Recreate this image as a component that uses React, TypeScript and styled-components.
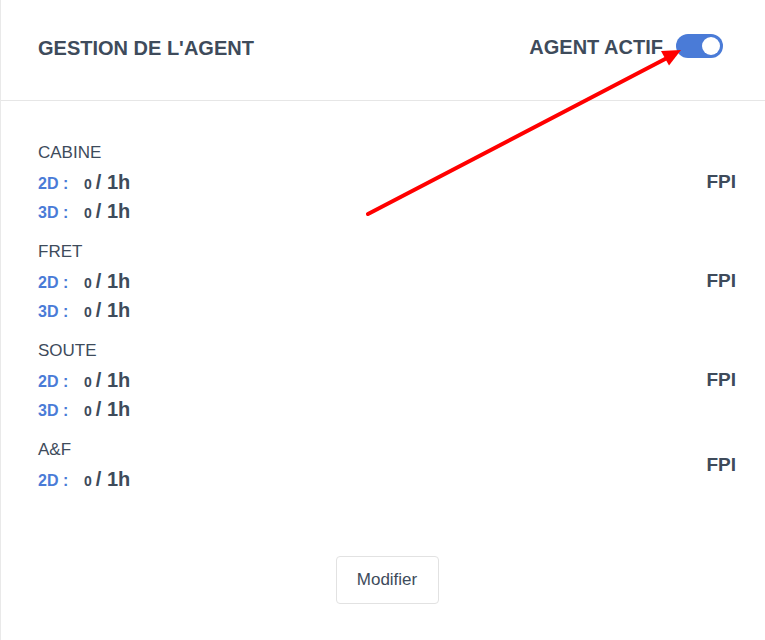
import React from "react"
import styled, { createGlobalStyle } from "styled-components"

const TEXT = "#3e4b5b"
const BLUE = "#4a7bd7"

const GlobalStyle = createGlobalStyle`
  html, body {
    margin: 0;
    padding: 0;
    background: #ffffff;
    font-family: "Liberation Sans", Arial, sans-serif;
    color: ${TEXT};
  }
`

const Card = styled.div`
  position: relative;
  width: 765px;
  height: 640px;
  box-sizing: border-box;
  border-left: 1px solid #e9e9e9;
  background: #fff;
`

const Header = styled.div`
  height: 101px;
  box-sizing: border-box;
  border-bottom: 1px solid #e6e6e6;
  display: flex;
  align-items: center;
  justify-content: space-between;
  padding: 0 42px 4px 37px;
`

const Title = styled.div`
  font-size: 20px;
  font-weight: bold;
`

const StatusWrap = styled.div`
  display: flex;
  align-items: center;
  gap: 13px;
  margin-top: -2px;
`

const Switch = styled.div<{ $on: boolean }>`
  position: relative;
  width: 47px;
  height: 24px;
  margin-top: -2px;
  border-radius: 12px;
  background: ${p => (p.$on ? BLUE : "#ccc")};

  &::after {
    content: "";
    position: absolute;
    top: 3px;
    left: ${p => (p.$on ? "26px" : "3px")};
    width: 18px;
    height: 18px;
    border-radius: 50%;
    background: #fff;
  }
`

const Body = styled.div`
  padding: 37px 29px 0 37px;
  display: flex;
  flex-direction: column;
  gap: 11px;
`

const Group = styled.div`
  display: flex;
  align-items: center;
  justify-content: space-between;
`

const Lines = styled.div`
  display: flex;
  flex-direction: column;
`

const Label = styled.div`
  height: 30px;
  font-size: 17px;
  line-height: 30px;
`

const Line = styled.div`
  height: 29px;
  line-height: 29px;
  display: flex;
  align-items: baseline;
  font-weight: bold;
`

const Dim = styled.span`
  color: ${BLUE};
  font-size: 16px;
  width: 46px;
`

const Count = styled.span`
  font-size: 14px;
  margin-right: 4px;
`

const Total = styled.span`
  font-size: 20px;
`

const Tag = styled.div`
  font-size: 19px;
  font-weight: bold;
`

const Actions = styled.div`
  display: flex;
  justify-content: center;
  margin-top: 51px;
`

const Button = styled.button`
  width: 103px;
  height: 48px;
  background: #fff;
  border: 1px solid #e2e2e2;
  border-radius: 4px;
  font-family: inherit;
  font-size: 17px;
  color: ${TEXT};
`

const Overlay = styled.svg`
  position: absolute;
  top: 0;
  left: 0;
  pointer-events: none;
`

const groups = [
  { name: "CABINE", dims: ["2D", "3D"] },
  { name: "FRET", dims: ["2D", "3D"] },
  { name: "SOUTE", dims: ["2D", "3D"] },
  { name: "A&F", dims: ["2D"] },
]

const App = () => {
  return (
    <Card>
      <GlobalStyle />
      <Header>
        <Title>GESTION DE L'AGENT</Title>
        <StatusWrap>
          <Title>AGENT ACTIF</Title>
          <Switch $on={true} />
        </StatusWrap>
      </Header>
      <Body>
        {groups.map(g => (
          <Group key={g.name}>
            <Lines>
              <Label>{g.name}</Label>
              {g.dims.map(d => (
                <Line key={d}>
                  <Dim>{d} :</Dim>
                  <Count>0</Count>
                  <Total>/ 1h</Total>
                </Line>
              ))}
            </Lines>
            <Tag>FPI</Tag>
          </Group>
        ))}
        <Actions>
          <Button>Modifier</Button>
        </Actions>
      </Body>
      <Overlay width="765" height="640">
        <line x1="367" y1="214" x2="666" y2="58" stroke="#f00" strokeWidth="4" strokeLinecap="round" />
        <polygon points="680,50 668,65.5 660,51" fill="#f00" />
      </Overlay>
    </Card>
  )
}

export default App
